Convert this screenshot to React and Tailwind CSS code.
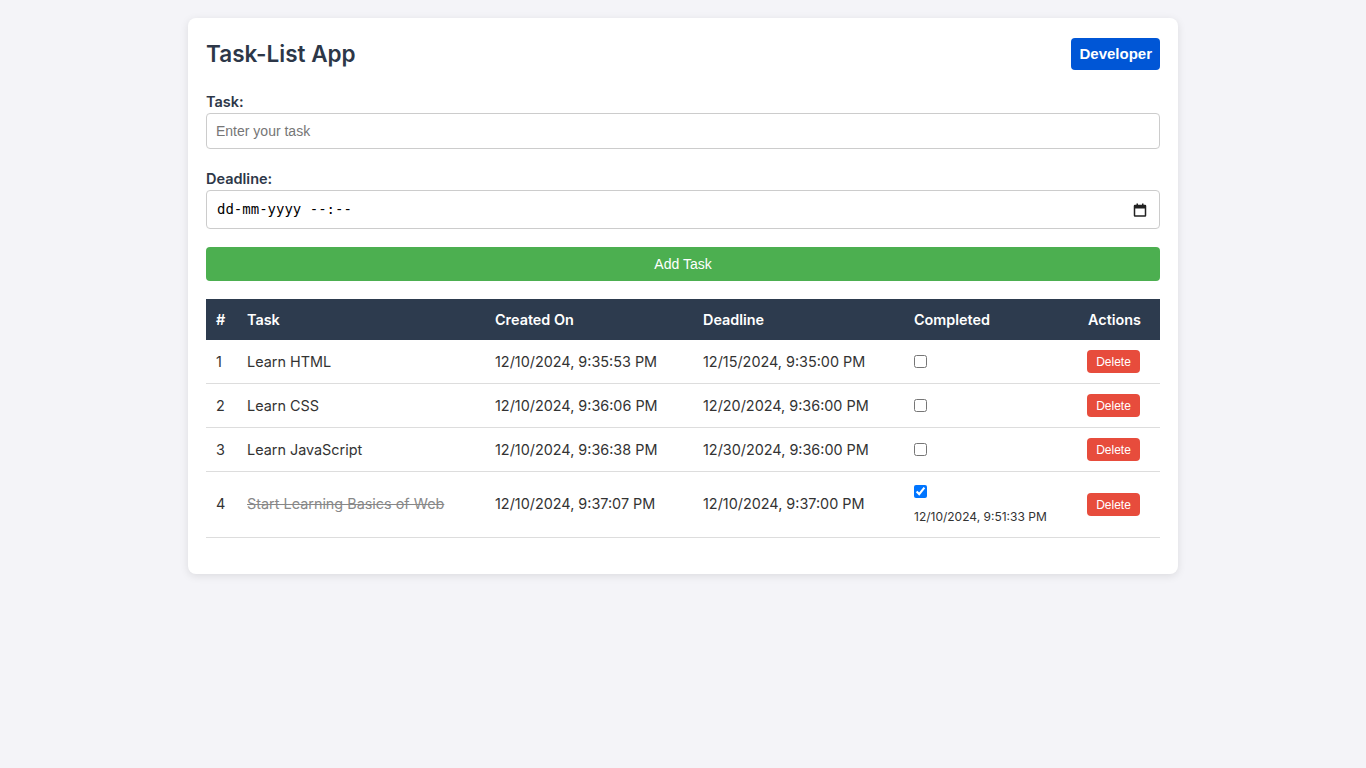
import { useState } from 'react'

const initialTasks = [
  { id: 1, text: 'Learn HTML', created: '12/10/2024, 9:35:53 PM', deadline: '12/15/2024, 9:35:00 PM', done: false },
  { id: 2, text: 'Learn CSS', created: '12/10/2024, 9:36:06 PM', deadline: '12/20/2024, 9:36:00 PM', done: false },
  { id: 3, text: 'Learn JavaScript', created: '12/10/2024, 9:36:38 PM', deadline: '12/30/2024, 9:36:00 PM', done: false },
  { id: 4, text: 'Start Learning Basics of Web', created: '12/10/2024, 9:37:07 PM', deadline: '12/10/2024, 9:37:00 PM', done: true, doneAt: '12/10/2024, 9:51:33 PM' },
]

export default function App() {
  const [tasks, setTasks] = useState(initialTasks)

  const toggle = (id) =>
    setTasks((t) => t.map((x) => (x.id === id ? { ...x, done: !x.done } : x)))
  const remove = (id) => setTasks((t) => t.filter((x) => x.id !== id))

  return (
    <div className="min-h-screen bg-[#f4f4f8] pt-[18px] font-['Inter',sans-serif] text-[#2d3748]">
      <div className="w-[990px] mx-auto bg-white rounded-lg shadow-[0_2px_8px_rgba(0,0,0,0.1)] px-[18px] pt-5 pb-9">
        {/* Header */}
        <div className="flex items-center justify-between">
          <h1 className="text-[22.5px] font-semibold text-[#2d3748] leading-8">Task-List App</h1>
          <button className="bg-[#0056d6] text-white font-['Liberation_Sans',Arial,sans-serif] font-bold text-[15px] px-[8px] h-8 rounded-[4px]">
            Developer
          </button>
        </div>

        {/* Form */}
        <div className="mt-[23px]">
          <label className="block text-[14.5px] font-semibold leading-[18px] mb-[2px]">Task:</label>
          <input
            type="text"
            placeholder="Enter your task"
            className="w-full h-9 border border-[#ccc] rounded-[4px] px-[9px] text-[14px] font-['Liberation_Sans',Arial,sans-serif] placeholder:text-[#767676] outline-none"
          />
        </div>
        <div className="mt-[21px]">
          <label className="block text-[14.5px] font-semibold leading-[18px] mb-[2px]">Deadline:</label>
          <div className="w-full h-[39px] border border-[#ccc] rounded-[4px] pl-[10px] pr-[12px] flex items-center justify-between">
            <span className="font-['DejaVu_Sans_Mono',monospace] text-[14px] text-black">dd-mm-yyyy --:--</span>
            <svg width="14" height="14" viewBox="0 0 14 14">
              <rect x="1.5" y="2.5" width="11" height="10.5" fill="none" stroke="#222" strokeWidth="1.5" rx="0.5" />
              <rect x="1.5" y="2.5" width="11" height="3" fill="#222" />
              <rect x="3.5" y="0.5" width="1.5" height="2.5" fill="#222" />
              <rect x="9" y="0.5" width="1.5" height="2.5" fill="#222" />
            </svg>
          </div>
        </div>
        <button className="mt-[18px] w-full h-[34px] bg-[#4caf50] text-white text-[14px] font-['Liberation_Sans',Arial,sans-serif] rounded-[4px]">
          Add Task
        </button>

        {/* Table */}
        <table className="mt-[18px] w-full border-collapse text-[14.4px] table-fixed">
          <thead>
            <tr className="bg-[#2d3b4e] text-white text-left h-[41px]">
              <th className="w-[31px] pl-[10px] font-semibold">#</th>
              <th className="w-[248px] pl-[10px] font-semibold">Task</th>
              <th className="w-[208px] pl-[10px] font-semibold">Created On</th>
              <th className="w-[211px] pl-[10px] font-semibold">Deadline</th>
              <th className="w-[174px] pl-[10px] font-semibold">Completed</th>
              <th className="pl-[10px] font-semibold">Actions</th>
            </tr>
          </thead>
          <tbody>
            {tasks.map((t) => (
              <tr key={t.id} className={`border-b border-[#ddd] text-[#333] ${t.doneAt && t.done ? 'h-[66px]' : 'h-[43.75px]'}`}>
                <td className="pl-[10px]">{t.id}</td>
                <td className={`pl-[10px] ${t.done ? 'line-through text-[#888]' : ''}`}>{t.text}</td>
                <td className="pl-[10px]">{t.created}</td>
                <td className="pl-[10px]">{t.deadline}</td>
                <td className="pl-[10px]">
                  <div className="flex flex-col items-start">
                    <input
                      type="checkbox"
                      checked={t.done}
                      onChange={() => toggle(t.id)}
                      className="w-[13px] h-[13px] m-0 accent-[#0075ff]"
                    />
                    {t.done && t.doneAt && (
                      <span className="text-[12px] mt-[12px] leading-[14px]">{t.doneAt}</span>
                    )}
                  </div>
                </td>
                <td className="pl-[9px]">
                  <button
                    onClick={() => remove(t.id)}
                    className="bg-[#e74c3c] text-white text-[12px] font-['Liberation_Sans',Arial,sans-serif] w-[53px] h-[23px] rounded-[4px]"
                  >
                    Delete
                  </button>
                </td>
              </tr>
            ))}
          </tbody>
        </table>
      </div>
    </div>
  )
}
